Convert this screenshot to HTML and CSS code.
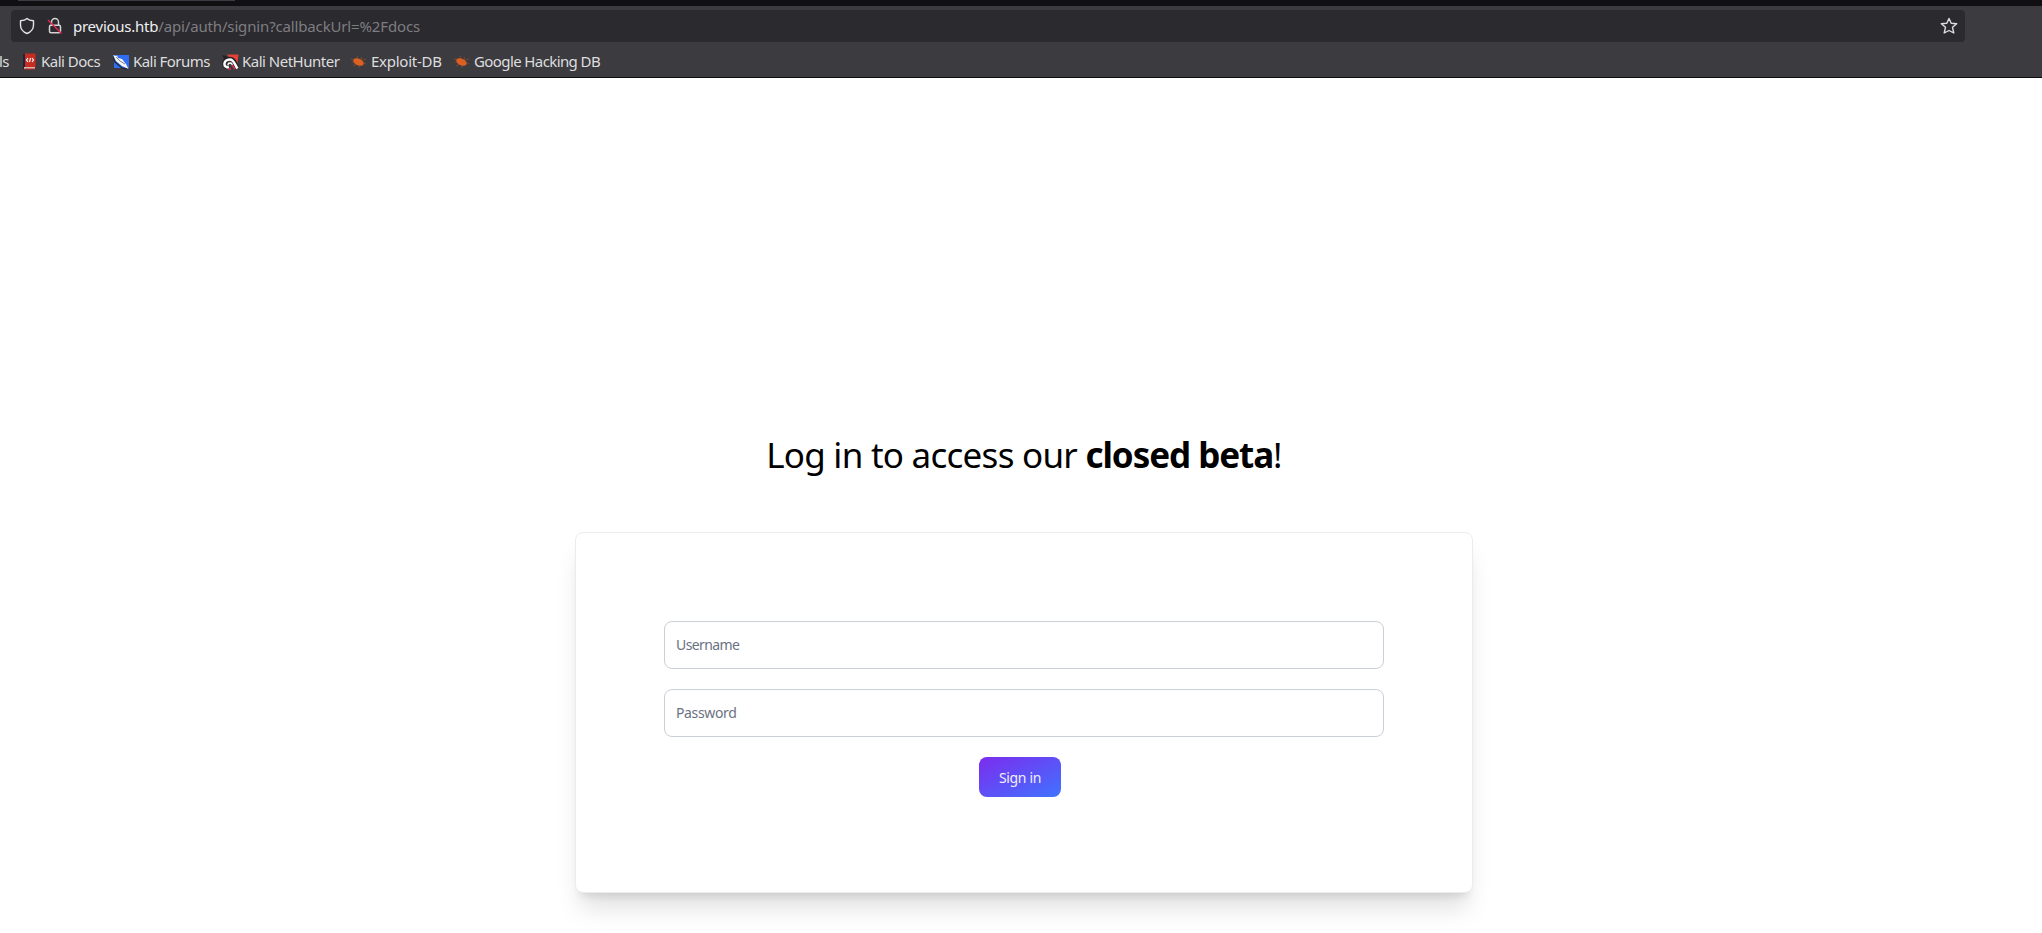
FILE: index.html
```html
<!DOCTYPE html>
<html lang="en">
<head>
<meta charset="utf-8">
<title>Sign in</title>
<link rel="stylesheet" href="styles.css">
</head>
<body>
<header class="browser">
  <div class="tabs"><div class="tab"></div></div>
  <div class="addressbar">
    <svg class="shield" width="16" height="18" viewBox="0 0 16 18" fill="none" stroke="#e3e3e5" stroke-width="1.4" stroke-linejoin="round"><path d="M8 1.500C6.500 3 4 3.600 1.500 3.800V8c0 4 2.500 6.900 6.500 8.500 4-1.600 6.500-4.500 6.500-8.500V3.800C12 3.600 9.500 3 8 1.500Z"/></svg>
    <svg class="lock" width="16" height="18" viewBox="0 0 16 18" fill="none" stroke="#d4d4d6" stroke-width="1.500"><path d="M4.500 8V5a3.500 3.500 0 0 1 7 0v3"/><rect x="2.500" y="8.200" width="11" height="7.600" rx="1.500"/><path d="M1 3 14.500 16.500" stroke="#e22850" stroke-width="1.400"/></svg>
    <div class="url"><span class="host">previous.htb</span><span class="path">/api/auth/signin?callbackUrl=%2Fdocs</span></div>
    <svg class="star" width="18" height="18" viewBox="0 0 18 18" fill="none" stroke="#dedee0" stroke-width="1.400" stroke-linejoin="round"><path d="m9 1.500 2.200 4.700 5.500.5-4.200 3.600 1.300 5.700L9 13.500 4.200 16l1.300-5.700L1.300 6.700l5.500-.5Z"/></svg>
  </div>
  <nav class="bookmarks">
    <span class="mark tools">ls</span>
    <svg class="icon docs" width="13" height="17" viewBox="0 0 13 17"><path d="M0 1h2v15H0z" fill="#20233d"/><path d="M2 .5h10.500V14H2z" fill="#c62d20"/><path d="M1 14h11v2H1z" fill="#d9b3ae"/><path d="M1.500 15.500H12v1H1z" fill="#b72a22"/><path d="M5 5.200 3.500 7 5 8.800M7.500 5 6.500 9M9 5.200l1.500 1.800L9 8.800" fill="none" stroke="#fff" stroke-width="1.100"/></svg>
    <span class="mark kdocs">Kali Docs</span>
    <svg class="icon forums" width="17" height="16" viewBox="0 0 17 16"><path d="M1 1h15v13H1z" fill="#316df3"/><path d="m0 2 2 6 7 6 6 1" fill="none" stroke="#1f2737" stroke-width="1.300"/><path d="M0 1 2.500 2 4 1.500 5 4l4 1 4 5 2.500 5L9 12 3 7Z" fill="#f5f5f5"/><path d="m3 3 4 4 5 3" fill="none" stroke="#485064" stroke-width=".7"/></svg>
    <span class="mark kforums">Kali Forums</span>
    <svg class="icon hunter" width="17" height="16" viewBox="0 0 17 16"><path d="M5 .5h11.500L15 13 9 6Z" fill="#e54236"/><path d="m0 1 4 1 2 2-4 1Z" fill="#222"/><path d="M5 13C0 11 3 5 8 5c4 0 5 4 7 9" fill="none" stroke="#242329" stroke-width="4.500"/><path d="M7 13.500C.5 14 1 5.500 8 5.500c4 0 4.500 5 7.500 9" fill="none" stroke="#fff" stroke-width="2.500"/><path d="M6 11.500c-.5-3 3.500-3.500 4.500-.500" fill="none" stroke="#fff" stroke-width="1.300"/><path d="m10 11 3 4M6 15h3" fill="none" stroke="#d92f46" stroke-width="1.600"/></svg>
    <span class="mark khunter">Kali NetHunter</span>
    <svg class="icon bug" width="15" height="12" viewBox="0 0 15 12"><g stroke="#985027" stroke-width=".7"><path d="m0 3 4 1M1 6h4M2 10l4-2M6 0l1 4M10 1l1 3M12 4l3-1M13 7l2 1M8 10v2"/></g><ellipse cx="7.500" cy="6" rx="5.600" ry="3.200" fill="#dc6022" transform="rotate(25 7.500 6)"/></svg>
    <span class="mark exploit">Exploit-DB</span>
    <svg class="icon bug" width="15" height="12" viewBox="0 0 15 12"><g stroke="#985027" stroke-width=".7"><path d="m0 3 4 1M1 6h4M2 10l4-2M6 0l1 4M10 1l1 3M12 4l3-1M13 7l2 1M8 10v2"/></g><ellipse cx="7.500" cy="6" rx="5.600" ry="3.200" fill="#dc6022" transform="rotate(25 7.500 6)"/></svg>
    <span class="mark google">Google Hacking DB</span>
  </nav>
</header>
<main class="page">
  <h1 class="title"><span>Log in to access our </span><strong>closed beta</strong><span>!</span></h1>
  <form class="card">
    <input class="field user" type="text" placeholder="Username">
    <input class="field pass" type="password" placeholder="Password">
    <button class="submit" type="button">Sign in</button>
  </form>
</main>
</body>
</html>
```

FILE: styles.css
```css
* { box-sizing: border-box; }
body { margin: 0; height: 933px; overflow: hidden; background: #fff; font-family: "Noto Sans", sans-serif; }
.browser { height: 78px; background: #3c3b40; border-bottom: 1px solid #0d0c10; }
.tabs { height: 6px; background: #101013; }
.tab { width: 217px; height: 1px; margin-left: 18px; background: #3c3b42; }
.addressbar { display: flex; align-items: center; height: 32px; width: 1954px; margin: 4px 0 0 11px; padding: 0 7px 0 8px; background: #2b2a2e; border-radius: 4px; }
.lock { margin-left: 12px; }
.url { margin-left: 10px; font-size: 15px; line-height: 32px; letter-spacing: -.15px; white-space: nowrap; color: #7e7d82; }
.host { color: #f0f0f2; letter-spacing: -.25px; }
.star { margin-left: auto; }
.bookmarks { display: flex; align-items: center; height: 35px; padding-top: 4px; color: #dededf; font-size: 15px; line-height: 20px; letter-spacing: -.5px; white-space: nowrap; }
.icon { flex: none; }
.mark { flex: none; padding-bottom: 2px; }
.tools { width: 9px; margin-right: 14px; direction: rtl; }
.kdocs { width: 60px; margin: 0 12px 0 5px; }
.kforums { width: 77px; margin: 0 12px 0 3px; letter-spacing: -.55px; }
.khunter { width: 98px; margin: 0 11px 0 3px; }
.exploit { width: 72px; margin: 0 11px 0 5px; letter-spacing: -.25px; }
.google { width: 126px; margin-left: 5px; letter-spacing: -.6px; }
.page { width: 898px; margin-left: 575px; padding-top: 354px; }
.title { margin: 0; height: 46px; line-height: 46px; font-size: 35px; font-weight: 400; letter-spacing: -.74px; text-align: center; white-space: nowrap; color: #000; }
.title strong { font-weight: 700; letter-spacing: -1.05px; }
.card { display: flex; flex-direction: column; align-items: center; gap: 20px; height: 361px; margin-top: 54px; padding: 88px; border: 1px solid #ececee; border-radius: 8px; background: #fff; box-shadow: 0 20px 25px -5px rgba(0,0,0,.12), 0 8px 10px -6px rgba(0,0,0,.12); }
.field { flex: none; width: 720px; height: 48px; padding: 0 11px 1px; border: 1px solid #cbcfd8; border-radius: 8px; background: #fff; font: 14px "Noto Sans", sans-serif; outline: 0; }
.user { letter-spacing: -.6px; }
.pass { letter-spacing: -.35px; }
.field::placeholder { color: #6a7282; opacity: 1; }
.submit { flex: none; width: 82px; height: 40px; margin-right: 8px; padding: 0; border: 0; border-radius: 8px; background: linear-gradient(to bottom right, #7c2cee, #4073ff); color: #f1efff; font: 14px "Noto Sans", sans-serif; letter-spacing: -.35px; }
```
